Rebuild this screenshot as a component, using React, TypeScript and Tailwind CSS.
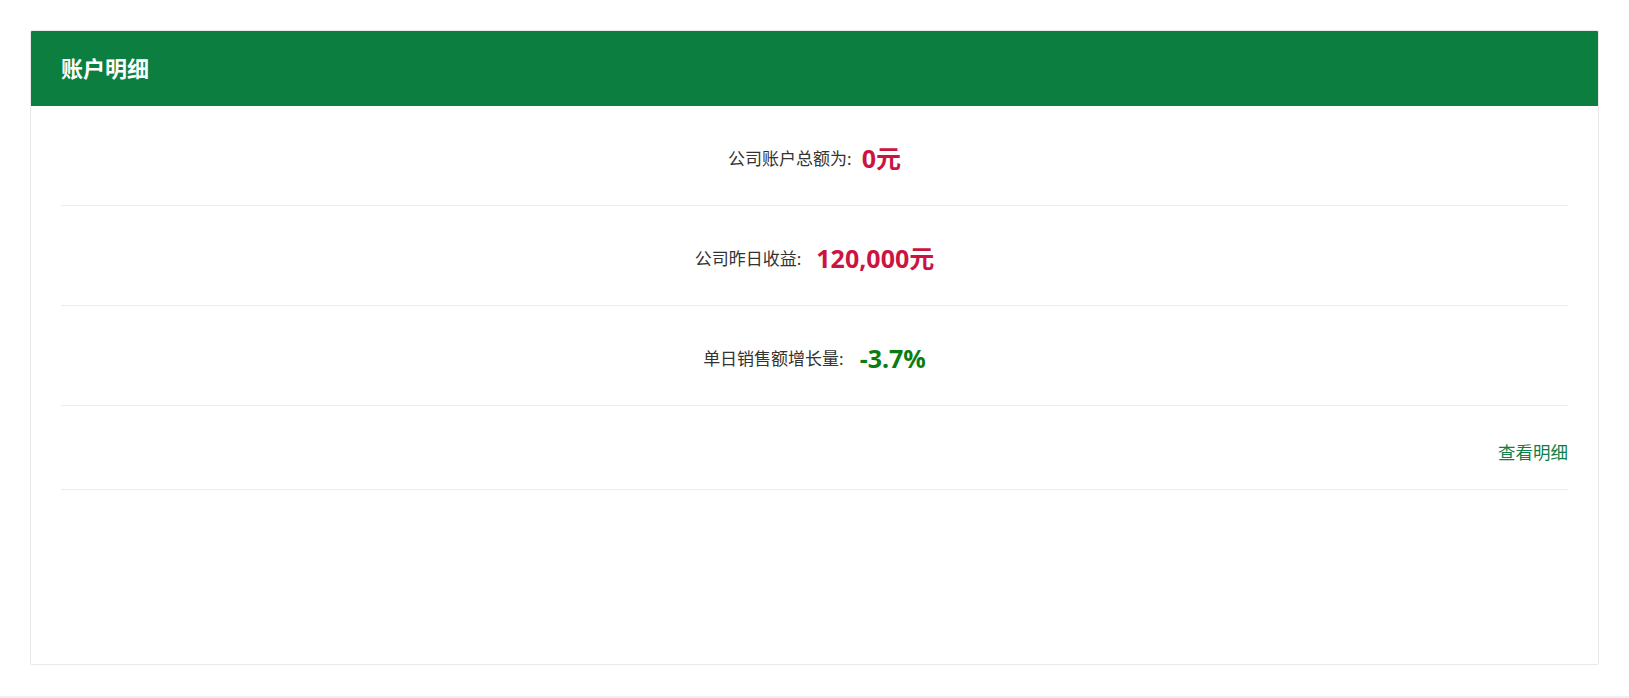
const font = { fontFamily: '"Noto Sans", "Noto Sans CJK SC", sans-serif' }

type Stat = { label: string; value: string; color: string; gap: string }

const stats: Stat[] = [
  { label: "公司账户总额为:", value: "0元", color: "text-[#cc1442]", gap: "ml-[10px]" },
  { label: "公司昨日收益:", value: "120,000元", color: "text-[#cc1442]", gap: "ml-[15px]" },
  { label: "单日销售额增长量:", value: "-3.7%", color: "text-[#0a7d10]", gap: "ml-[16px]" },
]

function StatRow({ stat }: { stat: Stat }) {
  return (
    <div className="flex h-[100px] items-center justify-center border-b border-[#ececec] pt-[6px]">
      <span className="text-[17px] text-[#333]">{stat.label}</span>
      <span className={`${stat.gap} text-[25px] font-bold ${stat.color}`}>{stat.value}</span>
    </div>
  )
}

export default function App() {
  return (
    <div className="flex h-[698px] w-full flex-col bg-white" style={font}>
      <div className="h-[696px] px-[30px] pt-[30px]">
        <div className="flex h-[635px] flex-col overflow-hidden rounded-[2px] border border-[#e9e9e9] bg-white">
          <div className="flex h-[75px] shrink-0 items-center bg-[#0c7f40] px-[30px]">
            <h2 className="text-[22px] font-bold text-white">账户明细</h2>
          </div>
          <div className="px-[30px]">
            {stats.map((s, i) => (
              <StatRow key={i} stat={s} />
            ))}
            <div className="flex h-[84px] items-center justify-end border-b border-[#ececec] pt-[10px]">
              <a href="#" className="text-[17.5px] text-[#0c8046]">查看明细</a>
            </div>
          </div>
        </div>
      </div>
      <div className="h-[2px] bg-[#eef0f5]" />
    </div>
  )
}
